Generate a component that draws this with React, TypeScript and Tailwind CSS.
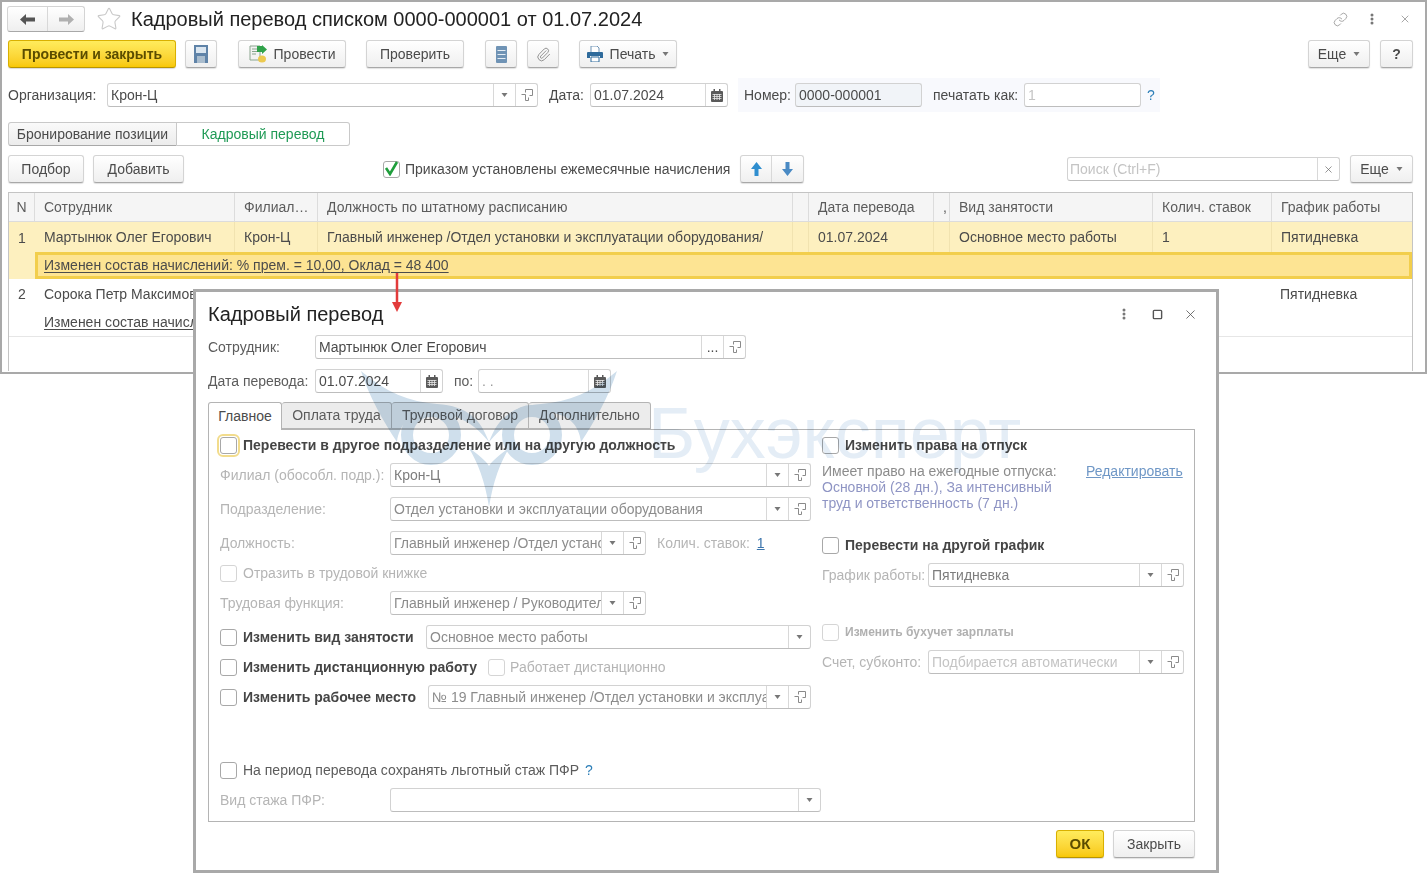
import React from 'react'
import { Star, Paperclip, Link, X, Square } from 'lucide-react'

const btn =
  'flex h-[28px] shrink-0 items-center justify-center rounded-[3px] border border-[#d4d4d4] border-b-[#a8a8a8] bg-gradient-to-b from-white to-[#efefef] text-[14px] text-[#4b4b4b] shadow-[0_1px_1px_rgba(0,0,0,0.12)]'
const yellowBtn =
  'flex h-[28px] shrink-0 items-center justify-center rounded-[3px] border border-[#d9b000] border-b-[#b89400] bg-gradient-to-b from-[#ffec5c] to-[#f8c800] font-bold text-[#5b4d00] shadow-[0_1px_1px_rgba(0,0,0,0.15)]'

function Caret({ color = '#777' }: { color?: string }) {
  return (
    <svg width="7" height="4" viewBox="0 0 7 4" className="shrink-0">
      <path d="M0.5 0h6L3.5 4z" fill={color} />
    </svg>
  )
}

function OpenIcon() {
  return (
    <svg width="12" height="12" viewBox="0 0 12 12" fill="none" stroke="#8a8a8a" className="shrink-0">
      <path d="M4.5 3.5V.5h7v6h-3" />
      <path d="M.5 4.5h7v7h-7z" fill="white" stroke="#8a8a8a" strokeWidth="0" />
      <path d="M.5 5.5h4v6h3V8.5" />
    </svg>
  )
}

function CalIcon() {
  return (
    <svg width="12" height="13" viewBox="0 0 12 13" className="shrink-0">
      <path d="M1 2h10a1 1 0 0 1 1 1v9a1 1 0 0 1-1 1H1a1 1 0 0 1-1-1V3a1 1 0 0 1 1-1z" fill="#5a5a5a" />
      <rect x="2.5" y="0" width="1.5" height="3" fill="#5a5a5a" />
      <rect x="8" y="0" width="1.5" height="3" fill="#5a5a5a" />
      <path d="M1.5 5.5h9M1.5 7.5h9M1.5 9.5h9M3.5 5v6M6 5v6M8.5 5v6" stroke="#e8e8e8" strokeWidth="0.8" />
    </svg>
  )
}

function SubBtn({ children, w = 22 }: { children: React.ReactNode; w?: number }) {
  return (
    <div
      className="flex h-full shrink-0 items-center justify-center border-l border-[#d8d8d8]"
      style={{ width: w }}
    >
      {children}
    </div>
  )
}

// поле ввода 1С с кнопками справа
function Field({
  w,
  text,
  tail,
  tone = '#4b4b4b',
  arrow,
  open,
  cal,
  dots,
  ml,
  bg = 'bg-white',
}: {
  w: number
  text?: string
  tail?: number
  tone?: string
  arrow?: boolean
  open?: boolean
  cal?: boolean
  dots?: boolean
  ml?: number
  bg?: string
}) {
  return (
    <div
      className={`flex h-[24px] shrink-0 items-center overflow-hidden rounded-[3px] border border-[#d2d2d2] border-b-[#bdbdbd] ${bg}`}
      style={{ width: w, marginLeft: ml, color: tone }}
    >
      <div className="min-w-0 flex-1 overflow-hidden whitespace-nowrap pl-[3px] text-[14px] leading-[22px]">
        {text}
      </div>
      {dots && <SubBtn>...</SubBtn>}
      {arrow && <SubBtn w={tail ?? 22}><Caret /></SubBtn>}
      {cal && <SubBtn><CalIcon /></SubBtn>}
      {open && <SubBtn><OpenIcon /></SubBtn>}
    </div>
  )
}

function Check({ checked, focus, light }: { checked?: boolean; focus?: boolean; light?: boolean }) {
  return (
    <div
      className={`relative flex h-[17px] w-[17px] shrink-0 items-center justify-center rounded-[3px] border bg-white ${
        light ? 'border-[#d5d5d5]' : 'border-[#a8a8a8]'
      } ${focus ? 'outline-2 outline-offset-1 outline-[#f2dc8c]' : ''}`}
    >
      {checked && (
        <svg width="15" height="15" viewBox="0 0 15 15" className="absolute -top-[1px] left-0">
          <path d="M2 7l4 6 7-12" fill="none" stroke="#1f9e3c" strokeWidth="2.6" />
        </svg>
      )}
    </div>
  )
}

const cols = [26, 200, 83, 475, 16, 125, 16, 203, 119, 141]

function Cell({ i, children, header }: { i: number; children?: React.ReactNode; header?: boolean }) {
  return (
    <div
      className={`flex h-full shrink-0 items-center overflow-hidden whitespace-nowrap text-[14px] ${
        i === 0 ? 'justify-center' : 'pl-[9px]'
      } ${i < cols.length - 1 ? (header ? 'border-r border-[#dcdcdc]' : 'border-r border-[#f1e3b0]') : ''}`}
      style={{ width: cols[i] }}
    >
      {children}
    </div>
  )
}

function Logo() {
  const wing =
    'M361 371C385 392 410 402 437 404C468 406 481 420 489 442C472 421 455 413 430 413C410 413 399 425 397 442C383 421 369 396 361 371Z'
  return (
    <svg viewBox="340 360 300 170" className="h-[170px] w-[300px]">
      <g fill="#cfdfec">
        <path d={wing} />
        <path d={wing} transform="matrix(-1 0 0 1 978 0)" />
        <path d="M489 507C485 482 478 462 468 447C479 455 486 461 489 466C492 461 499 455 510 447C500 462 493 482 489 507Z" />
      </g>
      <g fill="none" stroke="#cfdfec" strokeWidth="12">
        <circle cx="431" cy="435" r="24" />
        <circle cx="532" cy="435" r="24" />
      </g>
    </svg>
  )
}

function FormRow({ mt, children }: { mt: number; children: React.ReactNode }) {
  return (
    <div className="flex h-[24px] items-center" style={{ marginTop: mt }}>
      {children}
    </div>
  )
}

function Label({ w, children, strong }: { w?: number; children: React.ReactNode; strong?: boolean }) {
  return (
    <div
      className={`shrink-0 whitespace-nowrap text-[14px] ${strong ? 'font-bold text-[#454545]' : 'text-[#b5b5b5]'}`}
      style={{ width: w }}
    >
      {children}
    </div>
  )
}

function BackWindow() {
  return (
    <div className="h-[374px] border-2 border-[#a9a9a9] pl-[6px] pr-[12px] pt-[4px] text-[14px] text-[#4b4b4b]">
      <div className="flex h-[26px] items-center">
        <div className="flex h-[26px] w-[78px] -ml-[1px] items-center rounded-[3px] border border-[#d4d4d4] border-b-[#a8a8a8] bg-gradient-to-b from-white to-[#efefef]">
          <div className="flex h-full w-[40px] items-center justify-center border-r border-[#d8d8d8]">
            <svg width="15" height="11" viewBox="0 0 15 11"><path d="M6 0v3.5h9v4H6V11L0 5.5z" fill="#555" /></svg>
          </div>
          <div className="flex flex-1 items-center justify-center">
            <svg width="15" height="11" viewBox="0 0 15 11"><path d="M9 0v3.5H0v4h9V11l6-5.5z" fill="#b0b0b0" /></svg>
          </div>
        </div>
        <Star size={26} strokeWidth={1} color="#c9c9c9" className="ml-[11px]" />
        <div className="ml-[9px] whitespace-nowrap text-[20px] text-[#222]">
          Кадровый перевод списком 0000-000001 от 01.07.2024
        </div>
        <div className="ml-auto flex items-center text-[#8a8a8a]">
          <Link size={15} strokeWidth={1.2} className="mr-[22px]" />
          <svg width="4" height="12" viewBox="0 0 4 12" className="mr-[25px]">
            <circle cx="2" cy="2" r="1.5" fill="#777" /><circle cx="2" cy="6" r="1.5" fill="#777" /><circle cx="2" cy="10" r="1.5" fill="#777" />
          </svg>
          <X size={12} strokeWidth={1.5} className="mr-[2px]" />
        </div>
      </div>

      <div className="mt-[8px] flex items-center">
        <div className={`${yellowBtn} w-[168px] text-[14px]`}>Провести и закрыть</div>
        <div className={`${btn} ml-[9px] w-[32px]`}>
          <svg width="14" height="18" viewBox="0 0 14 18">
            <path d="M0 0h14v18H0z" fill="#5f83a8" />
            <path d="M2 2h10v6H2z" fill="#dbe6f0" />
            <path d="M3 11h8v7H3z" fill="#a9bccd" />
          </svg>
        </div>
        <div className={`${btn} ml-[21px] w-[108px] gap-[7px]`}>
          <svg width="18" height="18" viewBox="0 0 18 18">
            <path d="M1 1h10v14H1z" fill="#f3f3f3" stroke="#8aa58f" />
            <path d="M3 4h6M3 6.5h5M3 9h4" stroke="#8aa58f" />
            <path d="M8 1l5 0 0-1 5 4.5-5 4.5 0-2-5 0z" fill="#2fa24a" />
            <ellipse cx="13" cy="14" rx="4" ry="3.5" fill="#ecc94f" />
          </svg>
          Провести
        </div>
        <div className={`${btn} ml-[20px] w-[98px]`}>Проверить</div>
        <div className={`${btn} ml-[21px] w-[32px]`}>
          <svg width="11" height="17" viewBox="0 0 11 17">
            <path d="M0 1a1 1 0 0 1 1-1h9a1 1 0 0 1 1 1v15a1 1 0 0 1-1 1H1a1 1 0 0 1-1-1z" fill="#6f93b5" />
            <path d="M1.5 4.5h8M1.5 8.5h8M1.5 12.5h8" stroke="#e4edf5" strokeWidth="1.2" />
          </svg>
        </div>
        <div className={`${btn} ml-[10px] w-[32px]`}>
          <Paperclip size={15} strokeWidth={1.5} color="#8d8d8d" />
        </div>
        <div className={`${btn} ml-[20px] w-[98px] gap-[7px]`}>
          <svg width="16" height="16" viewBox="0 0 16 16">
            <path d="M4 0h6l2 2v5H4z" fill="#fff" stroke="#6f93b5" />
            <path d="M1 6h14a1 1 0 0 1 1 1v5h-3v-2H3v2H0V7a1 1 0 0 1 1-1z" fill="#2f6b9c" />
            <path d="M4 11h8v5H4z" fill="#fff" stroke="#2f6b9c" />
          </svg>
          Печать
          <Caret />
        </div>
        <div className={`${btn} ml-auto w-[62px] gap-[7px]`}>Еще <Caret /></div>
        <div className={`${btn} ml-[10px] w-[33px] font-bold`}>?</div>
      </div>

      <div className="mt-[15px] flex h-[24px] items-center">
        <div className="w-[99px] shrink-0 whitespace-nowrap">Организация:</div>
        <Field w={431} text="Крон-Ц" arrow open />
        <div className="ml-[11px] w-[41px] shrink-0">Дата:</div>
        <Field w={138} text="01.07.2024" cal />
        <div className="ml-[10px] flex h-[34px] w-[422px] shrink-0 items-center bg-[#f8f9fd] pl-[6px]">
          <div className="w-[51px] shrink-0">Номер:</div>
          <Field w={127} text="0000-000001" bg="bg-[#f1f4f8]" />
          <div className="ml-[11px] w-[91px] shrink-0 whitespace-nowrap">печатать как:</div>
          <Field w={117} text="1" tone="#c4c4c4" />
          <div className="ml-[6px] text-[#2d7fb8]">?</div>
        </div>
      </div>

      <div className="mt-[15px] flex h-[24px]">
        <div className="flex w-[169px] items-center justify-center rounded-l-[3px] border border-[#c9c9c9] border-b-[#a8a8a8] bg-gradient-to-b from-[#fafafa] to-[#ececec]">
          Бронирование позиции
        </div>
        <div className="flex w-[173px] items-center justify-center rounded-r-[3px] border border-l-0 border-[#c9c9c9] bg-white text-[#1f9a55]">
          Кадровый перевод
        </div>
      </div>

      <div className="mt-[9px] flex items-center">
        <div className={`${btn} w-[76px]`}>Подбор</div>
        <div className={`${btn} ml-[9px] w-[91px]`}>Добавить</div>
        <div className="ml-[199px]"><Check checked /></div>
        <div className="ml-[5px] w-[335px] shrink-0 whitespace-nowrap">Приказом установлены ежемесячные начисления</div>
        <div className={`${btn} w-[64px] !justify-start`}>
          <div className="flex h-full w-[31px] items-center justify-center border-r border-[#d8d8d8]">
            <svg width="11" height="14" viewBox="0 0 11 14"><path d="M5.5 0L11 7H7.5v7h-4V7H0z" fill="#2f8ecf" /></svg>
          </div>
          <div className="flex flex-1 items-center justify-center">
            <svg width="11" height="14" viewBox="0 0 11 14"><path d="M5.5 14L11 7H7.5V0h-4v7H0z" fill="#4a8ac4" /></svg>
          </div>
        </div>
        <div className="ml-[263px] flex h-[24px] w-[273px] shrink-0 items-center rounded-[3px] border border-[#d2d2d2] border-b-[#bdbdbd] bg-white">
          <div className="flex-1 pl-[2px] text-[#c4c4c4]">Поиск (Ctrl+F)</div>
          <SubBtn><X size={11} strokeWidth={1.5} color="#666" /></SubBtn>
        </div>
        <div className={`${btn} ml-[10px] w-[63px] gap-[7px]`}>Еще <Caret /></div>
      </div>

      <div className="mt-[9px] h-[179px] border border-b-0 border-[#c4c4c4]">
        <div className="flex h-[29px] border-b border-[#dcdcdc] bg-[#f5f5f5] text-[#5c5c5c]">
          {['N', 'Сотрудник', 'Филиал…', 'Должность по штатному расписанию', '', 'Дата перевода', ',', 'Вид занятости', 'Колич. ставок', 'График работы'].map((t, i) => (
            <Cell key={i} i={i} header>{t}</Cell>
          ))}
        </div>
        <div className="flex h-[57px] bg-[#fdf0bf]">
          <div className="flex w-[26px] shrink-0 justify-center pt-[6px]">1</div>
          <div className="min-w-0 flex-1">
            <div className="flex h-[30px]">
              {['Мартынюк Олег Егорович', 'Крон-Ц', 'Главный инженер /Отдел установки и эксплуатации оборудования/', '', '01.07.2024', '', 'Основное место работы', '1', 'Пятидневка'].map((t, i) => (
                <Cell key={i} i={i + 1}>{t}</Cell>
              ))}
            </div>
            <div className="flex h-[27px] items-center border-[3px] border-[#f2ce4c] bg-[#fde493] pl-[6px]">
              <span className="underline decoration-1 underline-offset-2">Изменен состав начислений: % прем. = 10,00, Оклад = 48 400</span>
            </div>
          </div>
        </div>
        <div className="flex h-[30px] items-center whitespace-nowrap">
          <div className="w-[26px] shrink-0 text-center">2</div>
          <div className="pl-[9px]">Сорока Петр Максимович</div>
          <div className="ml-auto w-[141px] pl-[9px]">Пятидневка</div>
        </div>
        <div className="flex h-[28px] items-center border-b border-[#e6e6e6] pl-[35px] whitespace-nowrap">
          <span className="underline decoration-1 underline-offset-2">Изменен состав начислений</span>
        </div>
      </div>
    </div>
  )
}

function Dialog() {
  return (
    <div className="absolute left-[193px] top-[289px] h-[584px] w-[1026px] border-[3px] border-[#a9a9a9] bg-white pl-[12px] pr-[21px] text-[14px] text-[#4b4b4b]">
      <div className="flex h-[40px] items-center pt-[4px]">
        <div className="text-[20px] text-[#222]">Кадровый перевод</div>
        <div className="ml-auto flex items-center text-[#555]">
          <svg width="4" height="12" viewBox="0 0 4 12" className="mr-[26px]">
            <circle cx="2" cy="2" r="1.5" fill="#777" /><circle cx="2" cy="6" r="1.5" fill="#777" /><circle cx="2" cy="10" r="1.5" fill="#777" />
          </svg>
          <Square size={11} strokeWidth={1.4} absoluteStrokeWidth className="mr-[20px]" />
          <X size={15} strokeWidth={1.3} className="-mr-[3px]" />
        </div>
      </div>
      <div className="mt-[3px] flex h-[24px] items-center">
        <div className="w-[107px] shrink-0 text-[#5c5c5c]">Сотрудник:</div>
        <Field w={431} text="Мартынюк Олег Егорович" dots open />
      </div>
      <div className="mt-[10px] flex h-[24px] items-center">
        <div className="w-[107px] shrink-0 text-[#5c5c5c]">Дата перевода:</div>
        <Field w={128} text="01.07.2024" cal />
        <div className="ml-[11px] w-[24px] shrink-0 text-[#5c5c5c]">по:</div>
        <Field w={133} text="  .  ." tone="#9a9a9a" cal />
      </div>

      <div className="mt-[9px] flex h-[28px] pl-0">
        <div className="relative z-10 flex h-[28px] w-[74px] items-center justify-center rounded-t-[3px] border border-b-0 border-[#b4b4b4] bg-white">Главное</div>
        {[['Оплата труда', 110], ['Трудовой договор', 137], ['Дополнительно', 122]].map(([t, w]) => (
          <div
            key={t as string}
            className="flex h-[27px] items-center justify-center rounded-t-[3px] border border-l-0 border-[#b4b4b4] bg-[#ececec] text-[#5c5c5c] whitespace-nowrap"
            style={{ width: w as number }}
          >
            {t}
          </div>
        ))}
      </div>

      <div className="-mt-px flex h-[393px] border border-[#b4b4b4] pl-[11px]">
        <div className="w-[602px] shrink-0 pt-[3px]">
          <FormRow mt={0}>
            <Check focus />
            <Label strong><span className="ml-[6px]">Перевести в другое подразделение или на другую должность</span></Label>
          </FormRow>
          <FormRow mt={6}><Label w={170}>Филиал (обособл. подр.):</Label><Field w={421} text="Крон-Ц" tone="#7d7d7d" arrow open /></FormRow>
          <FormRow mt={10}><Label w={170}>Подразделение:</Label><Field w={421} text="Отдел установки и эксплуатации оборудования" tone="#8c8c8c" arrow open /></FormRow>
          <FormRow mt={10}>
            <Label w={170}>Должность:</Label>
            <Field w={256} text="Главный инженер /Отдел установки" tone="#8c8c8c" arrow open />
            <Label><span className="ml-[11px]">Колич. ставок:</span></Label>
            <span className="ml-[7px] text-[#3d76ad] underline">1</span>
          </FormRow>
          <FormRow mt={6}>
            <Check light />
            <Label><span className="ml-[6px]">Отразить в трудовой книжке</span></Label>
          </FormRow>
          <FormRow mt={6}><Label w={170}>Трудовая функция:</Label><Field w={256} text="Главный инженер / Руководитель" tone="#8c8c8c" arrow open /></FormRow>
          <FormRow mt={10}>
            <Check />
            <Label strong w={189}><span className="ml-[6px]">Изменить вид занятости</span></Label>
            <Field w={385} text="Основное место работы" tone="#8c8c8c" arrow />
          </FormRow>
          <FormRow mt={6}>
            <Check />
            <Label strong><span className="ml-[6px]">Изменить дистанционную работу</span></Label>
            <div className="ml-[11px]"><Check light /></div>
            <Label><span className="ml-[5px]">Работает дистанционно</span></Label>
          </FormRow>
          <FormRow mt={6}>
            <Check />
            <Label strong w={191}><span className="ml-[6px]">Изменить рабочее место</span></Label>
            <Field w={383} text="№ 19 Главный инженер /Отдел установки и эксплуатации" tone="#8c8c8c" arrow open />
          </FormRow>
          <FormRow mt={49}>
            <Check />
            <div className="ml-[6px] whitespace-nowrap text-[#5c5c5c]">На период перевода сохранять льготный стаж ПФР</div>
            <span className="ml-[6px] text-[#2d7fb8]">?</span>
          </FormRow>
          <FormRow mt={6}><Label w={170}>Вид стажа ПФР:</Label><Field w={431} arrow /></FormRow>
        </div>

        <div className="w-[362px] shrink-0 pt-[3px]">
          <FormRow mt={0}>
            <Check />
            <Label strong><span className="ml-[6px]">Изменить права на отпуск</span></Label>
          </FormRow>
          <div className="mt-[6px] flex h-[48px] text-[14px] leading-[16px]">
            <div className="w-[264px] shrink-0 text-[#8c8c8c]">
              Имеет право на ежегодные отпуска:
              <div className="text-[#8f95c4]">Основной (28 дн.), За интенсивный<br />труд и ответственность (7 дн.)</div>
            </div>
            <span className="text-[#6f97c6] underline underline-offset-1">Редактировать</span>
          </div>
          <FormRow mt={22}>
            <Check />
            <Label strong><span className="ml-[6px]">Перевести на другой график</span></Label>
          </FormRow>
          <FormRow mt={6}><Label w={106}>График работы:</Label><Field w={256} text="Пятидневка" tone="#7d7d7d" arrow open /></FormRow>
          <FormRow mt={33}>
            <Check light />
            <span className="ml-[6px] text-[12px] font-bold text-[#b0b0b0]">Изменить бухучет зарплаты</span>
          </FormRow>
          <FormRow mt={6}><Label w={106}>Счет, субконто:</Label><Field w={256} text="Подбирается автоматически" tone="#c4c4c4" arrow open /></FormRow>
        </div>
      </div>

      <div className="mt-[8px] flex justify-end">
        <div className={`${yellowBtn} w-[48px] text-[15px]`}>ОК</div>
        <div className={`${btn} ml-[9px] w-[82px]`}>Закрыть</div>
      </div>
    </div>
  )
}

export default function App() {
  return (
    <div className="relative h-[873px] w-[1427px] overflow-hidden bg-white font-['Liberation_Sans',Arial,sans-serif]">
      <BackWindow />
      <Dialog />
      {/* водяной знак поверх формы */}
      <div className="pointer-events-none absolute left-[340px] top-[360px] flex items-start mix-blend-multiply">
        <Logo />
        <div className="ml-[8px] mt-[33px] whitespace-nowrap text-[72px] leading-[80px] text-[#e4edf6]">Бухэксперт</div>
      </div>
      <svg width="12" height="40" viewBox="0 0 12 40" className="pointer-events-none absolute left-[391px] top-[273px]">
        <path d="M6 0v32" stroke="#e23b3b" strokeWidth="2.5" />
        <path d="M1 29h10l-5 10z" fill="#e23b3b" />
      </svg>
    </div>
  )
}
